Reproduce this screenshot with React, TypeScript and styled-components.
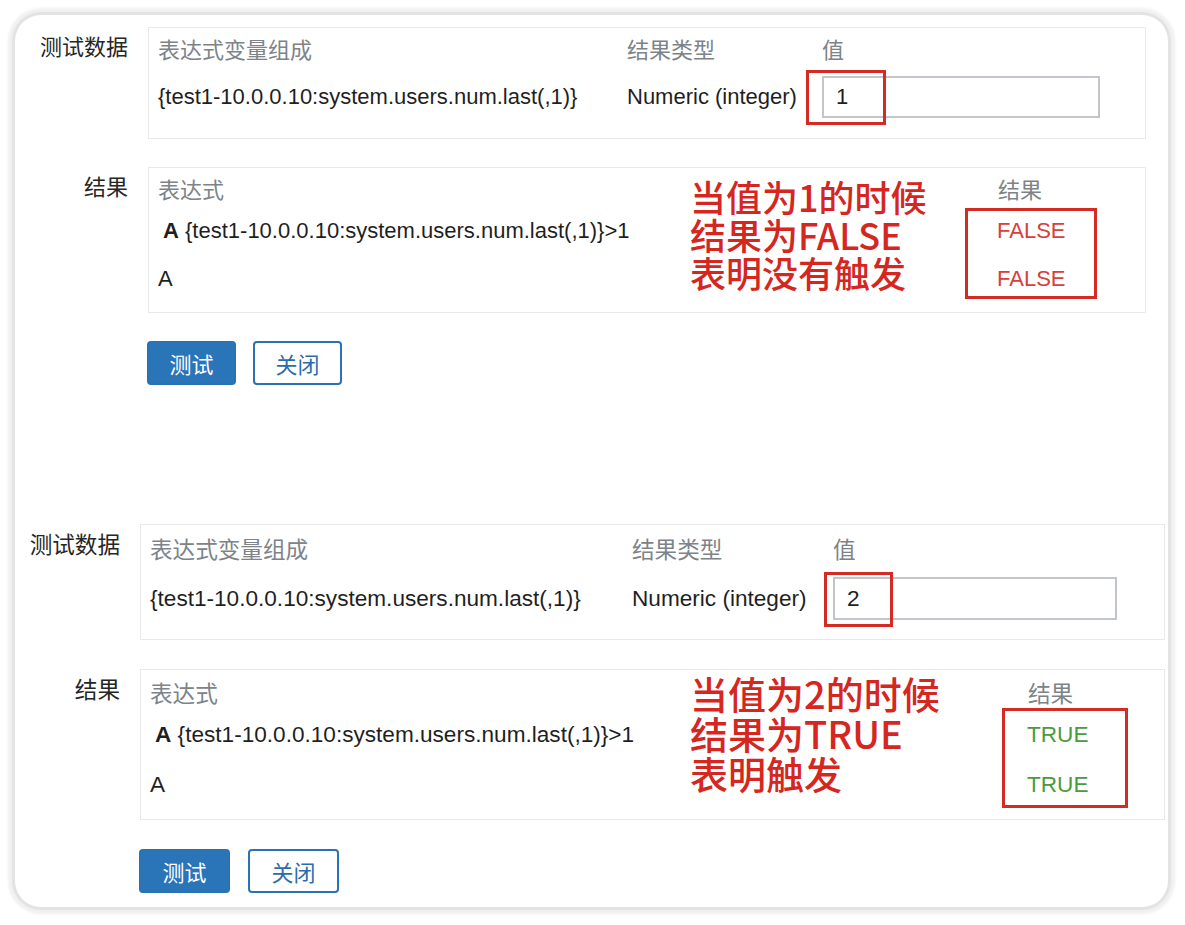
import React from 'react';
import styled, { createGlobalStyle } from 'styled-components';

type Box = { left: number; top: number; width: number; height: number };

type Layout = {
  top: number;
  labelWidth: number;
  panelWidth: number;
  labelOffset: number;
  panelGap: number;
  fontSize: number;
  data: {
    pad: [number, number];
    rowGap: number;
    cols: [number, number];
    input: [number, number];
    mark: Box;
  };
  result: {
    pad: [number, number];
    rows: [number, number, number];
    cols: [number, number];
    mark: Box;
    noteSize: number;
    noteLine: number;
    noteShift: number;
  };
  button: [number, number];
};

type Case = {
  value: string;
  result: string;
  ok: boolean;
  note: string[];
  layout: Layout;
};

const EXPR = '{test1-10.0.0.10:system.users.num.last(,1)}';

const cases: Case[] = [
  {
    value: '1',
    result: 'FALSE',
    ok: false,
    note: ['当值为1的时候', '结果为FALSE', '表明没有触发'],
    layout: {
      top: 12,
      labelWidth: 113,
      panelWidth: 998,
      labelOffset: 8,
      panelGap: 28,
      fontSize: 22,
      data: {
        pad: [10, 20],
        rowGap: 12,
        cols: [469, 195],
        input: [278, 42],
        mark: { left: -16, top: -6, width: 80, height: 55 },
      },
      result: {
        pad: [10, 20],
        rows: [26, 40, 48],
        cols: [532, 308],
        mark: { left: -33, top: 4, width: 132, height: 91 },
        noteSize: 36,
        noteLine: 38,
        noteShift: -1,
      },
      button: [89, 18],
    },
  },
  {
    value: '2',
    result: 'TRUE',
    ok: true,
    note: ['当值为2的时候', '结果为TRUE', '表明触发'],
    layout: {
      top: 139,
      labelWidth: 105,
      panelWidth: 1025,
      labelOffset: 9,
      panelGap: 29,
      fontSize: 22.6,
      data: {
        pad: [13, 19],
        rowGap: 13,
        cols: [482, 201],
        input: [284, 43],
        mark: { left: -9, top: -5, width: 69, height: 55 },
      },
      result: {
        pad: [12, 21],
        rows: [26, 40, 50],
        cols: [540, 338],
        mark: { left: -26, top: 0, width: 126, height: 100 },
        noteSize: 38,
        noteLine: 40,
        noteShift: -9,
      },
      button: [91, 19],
    },
  },
];

const GlobalStyle = createGlobalStyle`
  html, body {
    margin: 0;
    padding: 0;
    background: #ffffff;
  }
  body {
    font-family: "Liberation Sans", "Noto Sans CJK SC", sans-serif;
    color: #1f1f1f;
  }
`;

const Card = styled.div`
  box-sizing: border-box;
  margin: 15px;
  width: 1153px;
  height: 892px;
  background: #ffffff;
  border-radius: 26px;
  box-shadow: 0 0 0 3px #e3e3e3, 0 0 3px 7px #f0f0f0;
  overflow: hidden;
`;

const Block = styled.section<{ $l: Layout }>`
  display: grid;
  grid-template-columns: ${(p) => p.$l.labelWidth}px ${(p) => p.$l.panelWidth}px;
  column-gap: 20px;
  row-gap: ${(p) => p.$l.panelGap}px;
  padding-top: ${(p) => p.$l.top}px;
  font-size: ${(p) => p.$l.fontSize}px;
  line-height: 26px;
`;

const Label = styled.div<{ $offset: number }>`
  text-align: right;
  margin-top: ${(p) => p.$offset}px;
  color: #262626;
`;

const Panel = styled.div<{ $pad: [number, number] }>`
  box-sizing: border-box;
  border: 1px solid #e9e9e9;
  padding: ${(p) => p.$pad[0]}px 10px ${(p) => p.$pad[1]}px 9px;
`;

const DataGrid = styled.div<{ $cols: [number, number]; $gap: number }>`
  display: grid;
  grid-template-columns: ${(p) => p.$cols[0]}px ${(p) => p.$cols[1]}px 1fr;
  row-gap: ${(p) => p.$gap}px;
  align-items: center;
`;

const Head = styled.div`
  color: #7d8388;
`;

const ValueWrap = styled.div`
  position: relative;
  justify-self: start;
`;

const Input = styled.div<{ $size: [number, number] }>`
  box-sizing: border-box;
  width: ${(p) => p.$size[0]}px;
  height: ${(p) => p.$size[1]}px;
  border: 2px solid #c2c6ca;
  padding-left: 12px;
  display: flex;
  align-items: center;
  background: #fff;
`;

const Mark = styled.div<{ $box: Box }>`
  position: absolute;
  left: ${(p) => p.$box.left}px;
  top: ${(p) => p.$box.top}px;
  width: ${(p) => p.$box.width}px;
  height: ${(p) => p.$box.height}px;
  box-sizing: border-box;
  border: 3px solid #d52b25;
  pointer-events: none;
`;

const ResultGrid = styled.div<{ $rows: [number, number, number]; $cols: [number, number] }>`
  display: grid;
  grid-template-columns: ${(p) => p.$cols[0]}px ${(p) => p.$cols[1]}px 1fr;
  grid-template-rows: ${(p) => p.$rows.map((r) => `${r}px`).join(' ')};
`;

const Cell = styled.div<{ $col: number; $row: number }>`
  grid-column: ${(p) => p.$col};
  grid-row: ${(p) => p.$row};
  align-self: end;
  white-space: nowrap;
`;

const ExprLine = styled(Cell)`
  padding-left: 5px;
  b {
    font-weight: 700;
  }
`;

const Note = styled.div<{ $size: number; $line: number; $shift: number }>`
  grid-column: 2;
  grid-row: 1 / span 3;
  align-self: start;
  margin-top: ${(p) => p.$shift}px;
  font-family: "Noto Sans CJK SC", "Liberation Sans", sans-serif;
  font-size: ${(p) => p.$size}px;
  font-weight: 500;
  line-height: ${(p) => p.$line}px;
  color: #d5271f;
  white-space: nowrap;
  position: relative;
  z-index: 1;
`;

const Values = styled.div<{ $rows: [number, number, number] }>`
  grid-column: 3;
  grid-row: 2 / span 2;
  position: relative;
  display: flex;
  flex-direction: column;
  justify-content: flex-end;
  gap: ${(p) => p.$rows[2] - 26}px;
`;

const Outcome = styled.div<{ $ok: boolean }>`
  color: ${(p) => (p.$ok ? '#4a9a41' : '#d8403a')};
  margin-left: -1px;
`;

const Buttons = styled.div<{ $gap: number }>`
  grid-column: 2;
  display: flex;
  gap: ${(p) => p.$gap}px;
`;

const Button = styled.button<{ $primary?: boolean; $width: number }>`
  box-sizing: border-box;
  width: ${(p) => p.$width}px;
  height: 44px;
  margin-left: -1px;
  border-radius: 4px;
  font-family: "Liberation Sans", "Noto Sans CJK SC", sans-serif;
  font-size: 22px;
  cursor: pointer;
  border: 2px solid #2b72b5;
  background: ${(p) => (p.$primary ? '#2a74b8' : '#ffffff')};
  color: ${(p) => (p.$primary ? '#ffffff' : '#2b6dac')};
`;

const TestBlock = ({ c }: { c: Case }) => {
  const l = c.layout;
  return (
    <Block $l={l}>
      <Label $offset={l.labelOffset}>测试数据</Label>
      <Panel $pad={l.data.pad}>
        <DataGrid $cols={l.data.cols} $gap={l.data.rowGap}>
          <Head>表达式变量组成</Head>
          <Head>结果类型</Head>
          <Head>值</Head>
          <div>{EXPR}</div>
          <div>Numeric (integer)</div>
          <ValueWrap>
            <Input $size={l.data.input}>{c.value}</Input>
            <Mark $box={l.data.mark} />
          </ValueWrap>
        </DataGrid>
      </Panel>

      <Label $offset={l.labelOffset}>结果</Label>
      <Panel $pad={l.result.pad}>
        <ResultGrid $rows={l.result.rows} $cols={l.result.cols}>
          <Cell as={Head} $col={1} $row={1}>表达式</Cell>
          <ExprLine $col={1} $row={2}>
            <b>A</b> {EXPR}&gt;1
          </ExprLine>
          <Cell $col={1} $row={3}>A</Cell>
          <Note $size={l.result.noteSize} $line={l.result.noteLine} $shift={l.result.noteShift}>
            {c.note.map((line) => (
              <div key={line}>{line}</div>
            ))}
          </Note>
          <Cell as={Head} $col={3} $row={1}>结果</Cell>
          <Values $rows={l.result.rows}>
            <Outcome $ok={c.ok}>{c.result}</Outcome>
            <Outcome $ok={c.ok}>{c.result}</Outcome>
            <Mark $box={l.result.mark} />
          </Values>
        </ResultGrid>
      </Panel>

      <Buttons $gap={l.button[1]}>
        <Button $primary $width={l.button[0]}>测试</Button>
        <Button $width={l.button[0]}>关闭</Button>
      </Buttons>
    </Block>
  );
};

const App = () => (
  <>
    <GlobalStyle />
    <Card>
      {cases.map((c) => (
        <TestBlock key={c.value} c={c} />
      ))}
    </Card>
  </>
);

export default App;
